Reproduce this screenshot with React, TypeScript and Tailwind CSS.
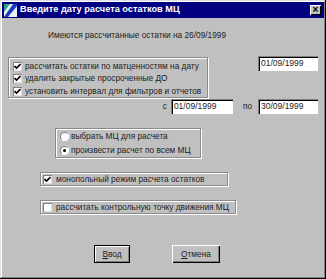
import React from 'react';

const font = { fontFamily: '"Liberation Sans", Arial, sans-serif' };

function Check({ checked }: { checked: boolean }) {
  return (
    <span className="flex h-[9px] w-[9px] shrink-0 items-center justify-center bg-white shadow-[inset_1px_1px_0_#808080,inset_-1px_-1px_0_#dfdfdf]">
      {checked && (
        <svg width="7" height="7" viewBox="0 0 7 7">
          <path d="M0.5 3 L2.5 5 L6.5 1" stroke="#000" strokeWidth="1.6" fill="none" />
        </svg>
      )}
    </span>
  );
}

function Radio({ checked }: { checked: boolean }) {
  return (
    <span className="flex h-[9px] w-[9px] shrink-0 items-center justify-center rounded-full border border-t-[#808080] border-l-[#808080] border-b-white border-r-white bg-white">
      {checked && <span className="h-[3px] w-[3px] rounded-full bg-black" />}
    </span>
  );
}

function DateBox({ value, w }: { value: string; w: string }) {
  return (
    <div
      className={`${w} flex h-[15px] items-center whitespace-nowrap bg-white pl-[3px] text-[8.5px] text-[#222] shadow-[inset_1px_1px_0_#808080,inset_2px_2px_0_#000,inset_-1px_-1px_0_#fff]`}
    >
      {value}
    </div>
  );
}

function Btn({ label, w, def }: { label: React.ReactNode; w: string; def?: boolean }) {
  return (
    <div
      className={`${w} flex h-[18px] items-center justify-center bg-[#c0c0c0] text-[8.3px] text-[#222] ${
        def
          ? 'border border-black shadow-[inset_1px_1px_0_#fff,inset_-1px_-1px_0_#808080]'
          : 'shadow-[inset_1px_1px_0_#fff,inset_-1px_-1px_0_#000,inset_-2px_-2px_0_#808080]'
      }`}
    >
      {label}
    </div>
  );
}

const groupBox = 'border border-[#8a8a8a] shadow-[inset_1px_1px_0_#fff,1px_1px_0_#fff]';

export default function App() {
  return (
    <div
      style={font}
      className="flex h-[279px] w-[326px] flex-col whitespace-nowrap bg-[#c0c0c0] p-[2px] text-[#222] shadow-[inset_-1px_-1px_0_#000,inset_1px_1px_0_#dfdfdf,inset_-2px_-2px_0_#808080,inset_2px_2px_0_#fff]"
    >
      <div className="flex h-[16px] items-center bg-[#000080] pl-[2px] pr-[2px]">
        <svg width="13" height="13" viewBox="0 0 13 13" className="shrink-0">
          <rect x="0" y="0" width="13" height="13" fill="#e8f4f4" />
          <path d="M0 13 L9 0 L13 0 L13 2 L4 13 Z" fill="#1a3cc0" />
          <path d="M0 0 L6 0 L0 8 Z" fill="#2aa08a" />
        </svg>
        <span className="ml-[3px] text-[9.2px] font-bold leading-none text-white">
          Введите дату расчета остатков МЦ
        </span>
        <div className="ml-auto mr-[1px] flex h-[10px] w-[11px] items-center justify-center bg-[#c0c0c0] text-[10px] font-bold leading-none text-black shadow-[inset_1px_1px_0_#fff,inset_-1px_-1px_0_#000]">
          ×
        </div>
      </div>

      <div className="mt-[12px] pl-[46px] text-[8.3px] leading-[11px]">
        Имеются рассчитанные остатки на 26/09/1999
      </div>

      <div className="mt-[15px] flex items-start justify-between pl-[6px] pr-[6px]">
        <div className={`${groupBox} mt-[1px] flex h-[41px] w-[200px] flex-col pl-[4px] pt-[2px]`}>
          {[
            'рассчитать остатки по матценностям на дату',
            'удалить закрытые просроченные ДО',
            'установить интервал для фильтров и отчетов',
          ].map((t) => (
            <div key={t} className="flex h-[13px] items-center gap-[3px] text-[8.3px]">
              <Check checked />
              <span>{t}</span>
            </div>
          ))}
        </div>
        <DateBox value="01/09/1999" w="w-[60px]" />
      </div>

      <div className="mt-[1px] flex items-center justify-end pr-[6px] text-[8.3px]">
        <span className="mr-[4px]">с</span>
        <DateBox value="01/09/1999" w="w-[62px]" />
        <span className="ml-[10px] mr-[6px]">по</span>
        <DateBox value="30/09/1999" w="w-[60px]" />
      </div>

      <div className={`${groupBox} ml-[53px] mt-[14px] flex h-[30px] w-[146px] flex-col justify-center pl-[4px]`}>
        <div className="flex h-[14px] items-center gap-[2px] text-[8.3px]">
          <Radio checked={false} />
          <span>выбрать МЦ для расчета</span>
        </div>
        <div className="flex h-[14px] items-center gap-[2px] text-[8.3px]">
          <Radio checked />
          <span>произвести расчет по всем МЦ</span>
        </div>
      </div>

      <div className={`${groupBox} ml-[38px] mt-[14px] flex h-[14px] w-[188px] items-center gap-[4px] pl-[2px] text-[8.3px]`}>
        <Check checked />
        <span>монопольный режим расчета остатков</span>
      </div>

      <div className={`${groupBox} ml-[38px] mt-[14px] flex h-[14px] w-[196px] items-center gap-[4px] pl-[2px] text-[8.3px]`}>
        <Check checked={false} />
        <span>рассчитать контрольную точку движения МЦ</span>
      </div>

      <div className="mt-[31px] flex">
        <div className="ml-[92px]">
          <Btn w="w-[36px]" def label={<span><u>В</u>вод</span>} />
        </div>
        <div className="ml-[42px]">
          <Btn w="w-[48px]" label={<span><u>О</u>тмена</span>} />
        </div>
      </div>
    </div>
  );
}
